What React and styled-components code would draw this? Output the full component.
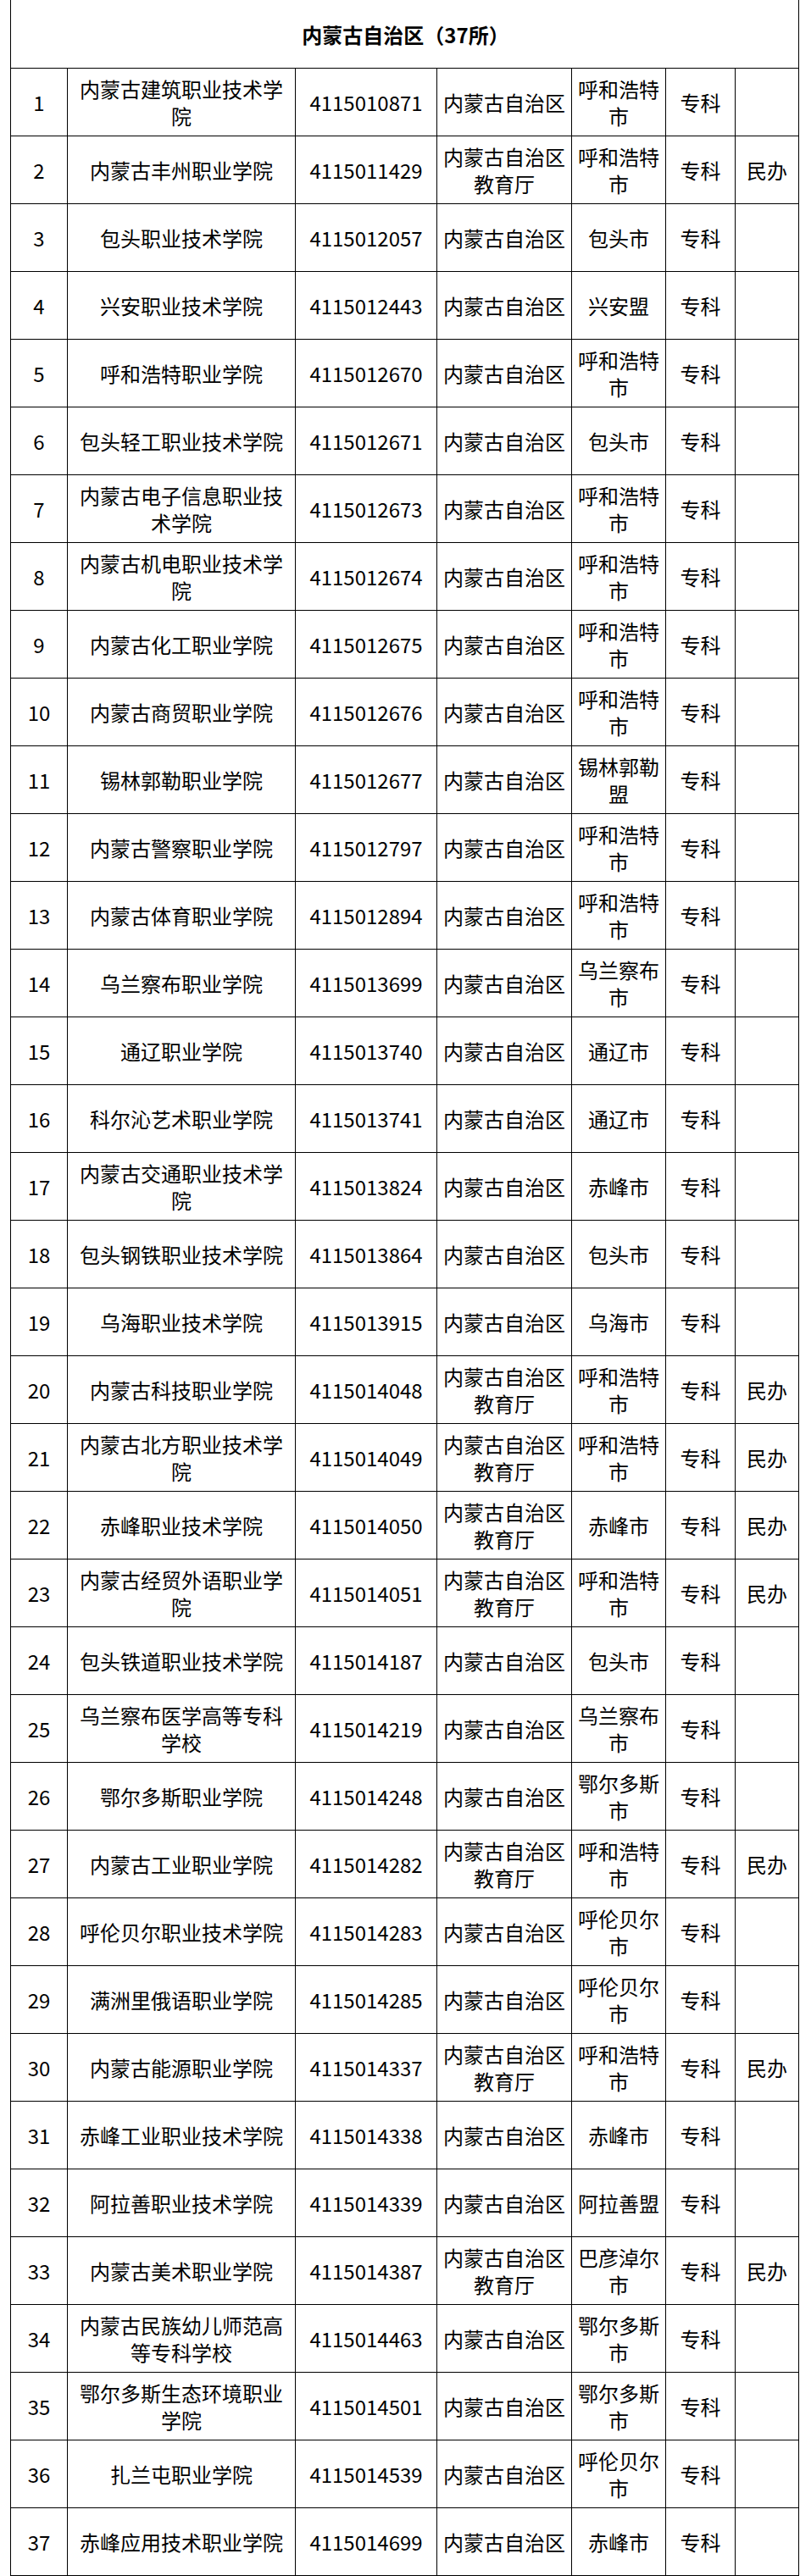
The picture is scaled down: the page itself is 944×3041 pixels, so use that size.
import React from 'react'
import styled, { createGlobalStyle } from 'styled-components'

const schools = [
	['内蒙古建筑职业技术学院', '4115010871', '内蒙古自治区', '呼和浩特市', '专科', ''],
	['内蒙古丰州职业学院', '4115011429', '内蒙古自治区教育厅', '呼和浩特市', '专科', '民办'],
	['包头职业技术学院', '4115012057', '内蒙古自治区', '包头市', '专科', ''],
	['兴安职业技术学院', '4115012443', '内蒙古自治区', '兴安盟', '专科', ''],
	['呼和浩特职业学院', '4115012670', '内蒙古自治区', '呼和浩特市', '专科', ''],
	['包头轻工职业技术学院', '4115012671', '内蒙古自治区', '包头市', '专科', ''],
	['内蒙古电子信息职业技术学院', '4115012673', '内蒙古自治区', '呼和浩特市', '专科', ''],
	['内蒙古机电职业技术学院', '4115012674', '内蒙古自治区', '呼和浩特市', '专科', ''],
	['内蒙古化工职业学院', '4115012675', '内蒙古自治区', '呼和浩特市', '专科', ''],
	['内蒙古商贸职业学院', '4115012676', '内蒙古自治区', '呼和浩特市', '专科', ''],
	['锡林郭勒职业学院', '4115012677', '内蒙古自治区', '锡林郭勒盟', '专科', ''],
	['内蒙古警察职业学院', '4115012797', '内蒙古自治区', '呼和浩特市', '专科', ''],
	['内蒙古体育职业学院', '4115012894', '内蒙古自治区', '呼和浩特市', '专科', ''],
	['乌兰察布职业学院', '4115013699', '内蒙古自治区', '乌兰察布市', '专科', ''],
	['通辽职业学院', '4115013740', '内蒙古自治区', '通辽市', '专科', ''],
	['科尔沁艺术职业学院', '4115013741', '内蒙古自治区', '通辽市', '专科', ''],
	['内蒙古交通职业技术学院', '4115013824', '内蒙古自治区', '赤峰市', '专科', ''],
	['包头钢铁职业技术学院', '4115013864', '内蒙古自治区', '包头市', '专科', ''],
	['乌海职业技术学院', '4115013915', '内蒙古自治区', '乌海市', '专科', ''],
	['内蒙古科技职业学院', '4115014048', '内蒙古自治区教育厅', '呼和浩特市', '专科', '民办'],
	['内蒙古北方职业技术学院', '4115014049', '内蒙古自治区教育厅', '呼和浩特市', '专科', '民办'],
	['赤峰职业技术学院', '4115014050', '内蒙古自治区教育厅', '赤峰市', '专科', '民办'],
	['内蒙古经贸外语职业学院', '4115014051', '内蒙古自治区教育厅', '呼和浩特市', '专科', '民办'],
	['包头铁道职业技术学院', '4115014187', '内蒙古自治区', '包头市', '专科', ''],
	['乌兰察布医学高等专科学校', '4115014219', '内蒙古自治区', '乌兰察布市', '专科', ''],
	['鄂尔多斯职业学院', '4115014248', '内蒙古自治区', '鄂尔多斯市', '专科', ''],
	['内蒙古工业职业学院', '4115014282', '内蒙古自治区教育厅', '呼和浩特市', '专科', '民办'],
	['呼伦贝尔职业技术学院', '4115014283', '内蒙古自治区', '呼伦贝尔市', '专科', ''],
	['满洲里俄语职业学院', '4115014285', '内蒙古自治区', '呼伦贝尔市', '专科', ''],
	['内蒙古能源职业学院', '4115014337', '内蒙古自治区教育厅', '呼和浩特市', '专科', '民办'],
	['赤峰工业职业技术学院', '4115014338', '内蒙古自治区', '赤峰市', '专科', ''],
	['阿拉善职业技术学院', '4115014339', '内蒙古自治区', '阿拉善盟', '专科', ''],
	['内蒙古美术职业学院', '4115014387', '内蒙古自治区教育厅', '巴彦淖尔市', '专科', '民办'],
	['内蒙古民族幼儿师范高等专科学校', '4115014463', '内蒙古自治区', '鄂尔多斯市', '专科', ''],
	['鄂尔多斯生态环境职业学院', '4115014501', '内蒙古自治区', '鄂尔多斯市', '专科', ''],
	['扎兰屯职业学院', '4115014539', '内蒙古自治区', '呼伦贝尔市', '专科', ''],
	['赤峰应用技术职业学院', '4115014699', '内蒙古自治区', '赤峰市', '专科', ''],
]

function App() {
	return (
		<>
			<GlobalStyle />
			<Sheet>
				<TitleRow>内蒙古自治区（37所）</TitleRow>
				{schools.map((s, i) => (
					<Row key={s[1]}>
						<Cell>{i + 1}</Cell>
						{s.map((v, j) => (
							<Cell key={j}>{v}</Cell>
						))}
					</Row>
				))}
			</Sheet>
		</>
	)
}

const GlobalStyle = createGlobalStyle`
	html, body {
		margin: 0;
		padding: 0;
		background: #fff;
	}

	body {
		padding-left: 12px;
		font-family: "Noto Sans CJK SC", "Microsoft YaHei", sans-serif;
		color: #000;
	}
`

const Sheet = styled.div`
	width: 931px;
	box-sizing: border-box;
	border-left: 1px solid #000;
	display: flex;
	flex-flow: column nowrap;
`

const TitleRow = styled.div`
	height: 81px;
	box-sizing: border-box;
	border-right: 1px solid #000;
	border-bottom: 1px solid #000;
	display: flex;
	align-items: center;
	justify-content: center;
	font-size: 24px;
	font-weight: bold;
	padding-left: 2px;
`

const Row = styled.div`
	display: grid;
	grid-template-columns: 67px 269px 167px 159px 111px 82px 75px;
	height: 80px;
`

const Cell = styled.div`
	box-sizing: border-box;
	border-right: 1px solid #000;
	border-bottom: 1px solid #000;
	padding: 0 6px;
	display: flex;
	align-items: center;
	justify-content: center;
	text-align: center;
	font-size: 24px;
	line-height: 32px;
	word-break: break-all;
`

export default App
